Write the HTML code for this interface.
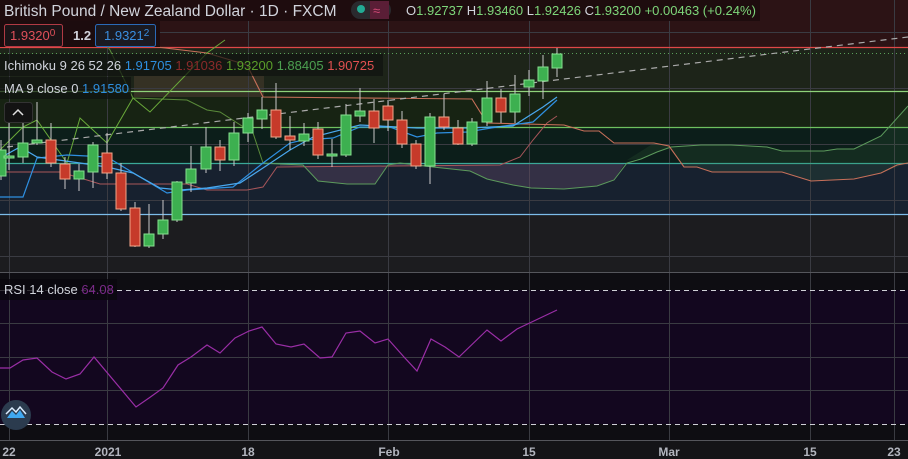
<!DOCTYPE html>
<html><head><meta charset="utf-8"><style>
html,body{margin:0;padding:0;background:#1c1c1f;}
svg{display:block;font-family:"Liberation Sans",sans-serif;}
</style></head><body>
<svg width="908" height="459" viewBox="0 0 908 459" xmlns="http://www.w3.org/2000/svg">
<defs><clipPath id="lowc"><rect x="0" y="164" width="908" height="60"/></clipPath></defs>
<rect x="0" y="0" width="908" height="47" fill="#2c1315"/>
<rect x="0" y="47" width="908" height="44" fill="#1d2419"/>
<rect x="0" y="91" width="908" height="36" fill="#172313"/>
<rect x="0" y="127" width="908" height="36" fill="#0c1e1a"/>
<rect x="0" y="163" width="908" height="51" fill="#17212f"/>
<rect x="0" y="214" width="908" height="58" fill="#1c1c1f"/>
<rect x="0" y="272" width="908" height="18" fill="#0e0d12"/>
<rect x="0" y="290" width="908" height="134" fill="#13071f"/>
<rect x="0" y="424" width="908" height="16" fill="#0e0d12"/>
<rect x="0" y="440" width="908" height="19" fill="#141417"/>
<rect x="134" y="76" width="130" height="21" fill="#353124"/>
<g stroke="#3a3b42" stroke-width="1">
<line x1="0" y1="32.5" x2="908" y2="32.5"/><line x1="0" y1="88.5" x2="908" y2="88.5"/><line x1="0" y1="144.5" x2="908" y2="144.5"/><line x1="0" y1="200.5" x2="908" y2="200.5"/><line x1="0" y1="256.5" x2="908" y2="256.5"/>
<line x1="0" y1="323.5" x2="908" y2="323.5"/><line x1="0" y1="357.5" x2="908" y2="357.5"/><line x1="0" y1="390.5" x2="908" y2="390.5"/>
<line x1="9.5" y1="0" x2="9.5" y2="440"/><line x1="107.5" y1="0" x2="107.5" y2="440"/><line x1="248.5" y1="0" x2="248.5" y2="440"/><line x1="388.5" y1="0" x2="388.5" y2="440"/><line x1="529.5" y1="0" x2="529.5" y2="440"/><line x1="669.5" y1="0" x2="669.5" y2="440"/><line x1="810.5" y1="0" x2="810.5" y2="440"/><line x1="894.5" y1="0" x2="894.5" y2="440"/>
</g>
<line x1="0" y1="272.5" x2="908" y2="272.5" stroke="#55565c"/>
<line x1="0" y1="440.5" x2="908" y2="440.5" stroke="#55565c"/>
<line x1="0" y1="47.5" x2="908" y2="47.5" stroke="#e04848" stroke-width="1.3"/>
<line x1="0" y1="53.5" x2="908" y2="53.5" stroke="#5aa05a" stroke-dasharray="1,3"/>
<line x1="0" y1="91.5" x2="908" y2="91.5" stroke="#8fd27a" stroke-width="1.2"/>
<line x1="0" y1="127.5" x2="908" y2="127.5" stroke="#6ec060" stroke-width="1.2"/>
<line x1="0" y1="163.5" x2="908" y2="163.5" stroke="#3aa898" stroke-width="1.2"/>
<line x1="0" y1="214.5" x2="908" y2="214.5" stroke="#7cbcea" stroke-width="1.2"/>
<line x1="0" y1="290.5" x2="908" y2="290.5" stroke="#cfcfd6" stroke-dasharray="5,4"/>
<line x1="0" y1="424.5" x2="908" y2="424.5" stroke="#cfcfd6" stroke-dasharray="5,4"/>
<g clip-path="url(#lowc)">
<polygon fill="rgba(130,90,130,0.28)" points="280,166 500,165 520,157 533,140 547,123 557,116 557,189 531,188 513,185 487,179 470,171 433,167 400,163 388,165 375,184 347,184 318,181 303,165 280,164"/>
<polygon fill="rgba(130,90,130,0.28)" points="557,125 564,125 584,131 599,131 614,143 627,160 614,180 597,186 564,189 557,189"/>
</g>
<polygon fill="rgba(70,130,70,0.15)" points="627,160 654,143 669,146 684,167 697,167 712,172 782,172 811,181 854,179 881,173 908,163 908,106 881,136 854,149 837,149 824,151 782,151 767,147 731,145 701,145 671,147 657,152 641,159"/>
<polyline fill="none" stroke="#a8565a" stroke-width="1" points="0,172 60,172 87,180 100,184 187,184 207,190 247,190 263,187 277,167 500,165 520,157 533,140 547,123 557,116"/>
<polyline fill="none" stroke="#5c9a5c" stroke-width="1" points="263,163 280,164 303,165 318,181 347,184 375,184 388,165 400,163 433,167 470,171 487,179 513,185 531,188 564,189 597,186 614,180 627,163 641,159 657,152 671,147 701,145 731,145 767,147 782,151 824,151 837,149 854,149 881,136 908,106"/>
<polyline fill="none" stroke="#c8705a" stroke-width="1.1" points="0,20 140,45 207,53 247,65 263,97 472,99 487,123 564,125 584,131 599,131 614,143 654,143 669,146 684,167 697,167 712,172 782,172 811,181 854,179 881,173 897,165 908,163"/>
<polyline fill="none" stroke="#5a8a3a" stroke-width="1" points="70,0 110,50 133,98 187,100 207,110 220,112 253,133 263,163"/>
<polyline fill="none" stroke="#6aaa3a" stroke-width="1" points="0,150 23,127 37,120 67,163 80,118 107,143 133,98 150,112 207,53 225,40"/>
<polyline fill="none" stroke="#aaaaaa" stroke-width="1.2" stroke-dasharray="6,5" points="7,147 908,37"/>
<polyline fill="none" stroke="#2e8fe0" stroke-width="1.2" points="0,197 23,197 37,158 67,155 107,157 140,177 167,193 187,190 233,187 263,163 290,143 303,140 333,138 360,127 390,127 417,137 437,133 467,132 497,127 533,122 557,100"/>
<polyline fill="none" stroke="#4aa8ee" stroke-width="1.2" points="0,158 20,147 37,157 80,163 107,167 133,173 160,188 180,190 207,188 240,183 260,170 290,150 313,137 360,125 417,128 467,128 513,126 543,107 557,97"/>
<g stroke="#c8c8c8" stroke-width="1">
<line x1="1" y1="140" x2="1" y2="180"/><line x1="9" y1="123" x2="9" y2="170"/><line x1="23" y1="123" x2="23" y2="163"/><line x1="37" y1="102" x2="37" y2="145"/><line x1="51" y1="123" x2="51" y2="167"/><line x1="65" y1="157" x2="65" y2="189"/><line x1="79" y1="164" x2="79" y2="191"/><line x1="93" y1="142" x2="93" y2="188"/><line x1="107" y1="133" x2="107" y2="179"/><line x1="121" y1="163" x2="121" y2="211"/><line x1="135" y1="202" x2="135" y2="247"/><line x1="149" y1="204" x2="149" y2="248"/><line x1="163" y1="200" x2="163" y2="239"/><line x1="177" y1="181" x2="177" y2="222"/><line x1="191" y1="146" x2="191" y2="192"/><line x1="206" y1="127" x2="206" y2="173"/><line x1="220" y1="140" x2="220" y2="171"/><line x1="234" y1="122" x2="234" y2="166"/><line x1="248" y1="113" x2="248" y2="142"/><line x1="262" y1="97" x2="262" y2="129"/><line x1="276" y1="83" x2="276" y2="139"/><line x1="290" y1="116" x2="290" y2="150"/><line x1="304" y1="123" x2="304" y2="146"/><line x1="318" y1="122" x2="318" y2="159"/><line x1="332" y1="139" x2="332" y2="167"/><line x1="346" y1="104" x2="346" y2="157"/><line x1="360" y1="88" x2="360" y2="122"/><line x1="374" y1="99" x2="374" y2="143"/><line x1="388" y1="100" x2="388" y2="131"/><line x1="402" y1="111" x2="402" y2="148"/><line x1="416" y1="140" x2="416" y2="169"/><line x1="430" y1="113" x2="430" y2="184"/><line x1="444" y1="94" x2="444" y2="130"/><line x1="458" y1="120" x2="458" y2="145"/><line x1="472" y1="118" x2="472" y2="146"/><line x1="487" y1="81" x2="487" y2="126"/><line x1="501" y1="89" x2="501" y2="123"/><line x1="515" y1="75" x2="515" y2="123"/><line x1="529" y1="70" x2="529" y2="96"/><line x1="543" y1="55" x2="543" y2="99"/><line x1="557" y1="48" x2="557" y2="77"/>
</g>
<g fill="#3db050" stroke="#86e08f" stroke-width="1">
<rect x="-4" y="150" width="10" height="26"/><rect x="4" y="156" width="10" height="2"/><rect x="18" y="143" width="10" height="14"/><rect x="32" y="140" width="10" height="3"/><rect x="74" y="171" width="10" height="8"/><rect x="88" y="145" width="10" height="27"/><rect x="144" y="234" width="10" height="12"/><rect x="158" y="220" width="10" height="14"/><rect x="172" y="182" width="10" height="38"/><rect x="186" y="169" width="10" height="14"/><rect x="201" y="147" width="10" height="22"/><rect x="229" y="133" width="10" height="27"/><rect x="243" y="118" width="10" height="15"/><rect x="257" y="110" width="10" height="9"/><rect x="299" y="134" width="10" height="7"/><rect x="327" y="154" width="10" height="2"/><rect x="341" y="115" width="10" height="40"/><rect x="355" y="111" width="10" height="5"/><rect x="425" y="117" width="10" height="49"/><rect x="467" y="122" width="10" height="22"/><rect x="482" y="98" width="10" height="24"/><rect x="510" y="94" width="10" height="18"/><rect x="524" y="80" width="10" height="7"/><rect x="538" y="67" width="10" height="14"/><rect x="552" y="54" width="10" height="14"/>
</g>
<g fill="#c63a2a" stroke="#f2a58a" stroke-width="1">
<rect x="46" y="140" width="10" height="23"/><rect x="60" y="164" width="10" height="15"/><rect x="102" y="153" width="10" height="20"/><rect x="116" y="173" width="10" height="36"/><rect x="130" y="208" width="10" height="38"/><rect x="215" y="147" width="10" height="13"/><rect x="271" y="110" width="10" height="27"/><rect x="285" y="136" width="10" height="4"/><rect x="313" y="129" width="10" height="26"/><rect x="369" y="111" width="10" height="17"/><rect x="383" y="106" width="10" height="14"/><rect x="397" y="120" width="10" height="24"/><rect x="411" y="144" width="10" height="22"/><rect x="439" y="117" width="10" height="10"/><rect x="453" y="128" width="10" height="16"/><rect x="496" y="98" width="10" height="14"/>
</g>
<polyline fill="none" stroke="#9a2ea6" stroke-width="1.2" points="0,368 10,368 23,360 37,358 52,372 66,379 80,374 94,357 136,407 149,398 163,388 178,365 191,357 207,345 220,353 235,338 249,331 262,327 276,344 291,347 304,344 320,358 332,357 346,333 360,331 375,343 388,339 404,357 417,371 431,339 445,347 459,357 487,330 501,341 517,329 557,310"/>
<rect x="0" y="0" width="760" height="21" fill="#1e0c0e"/>
<text x="4" y="16" font-size="15.5" fill="#d1d4dc">British Pound / New Zealand Dollar · 1D · FXCM</text>
<rect x="351" y="1" width="40" height="18" rx="9" fill="#2a2a2e"/>
<circle cx="361" cy="9" r="4" fill="#22ab94"/>
<rect x="370" y="1" width="19" height="18" fill="#5a1e36"/>
<text x="373" y="15" font-size="13" fill="#d64a78">≈</text>
<text x="406" y="15" font-size="13" fill="#d1d4dc">O<tspan fill="#7ed67a">1.92737</tspan> H<tspan fill="#7ed67a">1.93460</tspan> L<tspan fill="#7ed67a">1.92426</tspan> C<tspan fill="#7ed67a">1.93200</tspan> <tspan fill="#7ed67a">+0.00463 (+0.24%)</tspan></text>
<rect x="0" y="21" width="160" height="26" fill="#1c0c0e"/>
<rect x="4.5" y="24.5" width="58" height="22" rx="2" fill="#1b1417" stroke="#b03a44"/>
<text x="10" y="40" font-size="13" fill="#e0505a">1.9320<tspan font-size="10" dy="-4">0</tspan></text>
<text x="73" y="40" font-size="13" font-weight="bold" fill="#d1d4dc">1.2</text>
<rect x="95.5" y="24.5" width="60" height="22" rx="2" fill="#1a1a22" stroke="#2a6ab8"/>
<text x="104" y="40" font-size="13" fill="#3a8ee0">1.9321<tspan font-size="10" dy="-4">2</tspan></text>
<rect x="0" y="54" width="383" height="22" fill="rgba(16,18,16,0.7)"/>
<text x="4" y="70" font-size="13" fill="#d1d4dc">Ichimoku 9 26 52 26 <tspan fill="#2e8fe0">1.91705</tspan> <tspan fill="#8a2a2a">1.91036</tspan> <tspan fill="#5a9e2a">1.93200</tspan> <tspan fill="#4ca050">1.88405</tspan> <tspan fill="#e05050">1.90725</tspan></text>
<rect x="0" y="77" width="131" height="22" fill="rgba(16,18,16,0.7)"/>
<text x="4" y="93" font-size="13" fill="#d1d4dc">MA 9 close 0 <tspan fill="#2e8fe0">1.91580</tspan></text>
<rect x="4.5" y="102.5" width="28" height="20" rx="3" fill="#131313" stroke="#333"/>
<polyline points="13,115 18,110 23,115" fill="none" stroke="#e0e0e0" stroke-width="1.5"/>
<rect x="0" y="279" width="117" height="21" fill="rgba(10,8,14,0.8)"/>
<text x="4" y="294" font-size="13" fill="#d1d4dc">RSI 14 close <tspan fill="#7b2a8a">64.08</tspan></text>
<circle cx="16" cy="415" r="15" fill="#2b3b4e"/>
<path d="M7,418 L12,411 L16,415 L20,410 L25,418 Z" fill="#40a8f0"/>
<path d="M6,414 L12,408 L16,412 L20,407 L26,414" fill="none" stroke="#ddeeff" stroke-width="1.5"/>
<g font-size="12" font-weight="bold" fill="#b2b5be" text-anchor="middle">
<text x="9" y="456">22</text><text x="108" y="456">2021</text><text x="248" y="456">18</text><text x="389" y="456">Feb</text><text x="529" y="456">15</text><text x="669" y="456">Mar</text><text x="810" y="456">15</text><text x="894" y="456">23</text>
</g>
</svg>
</body></html>
